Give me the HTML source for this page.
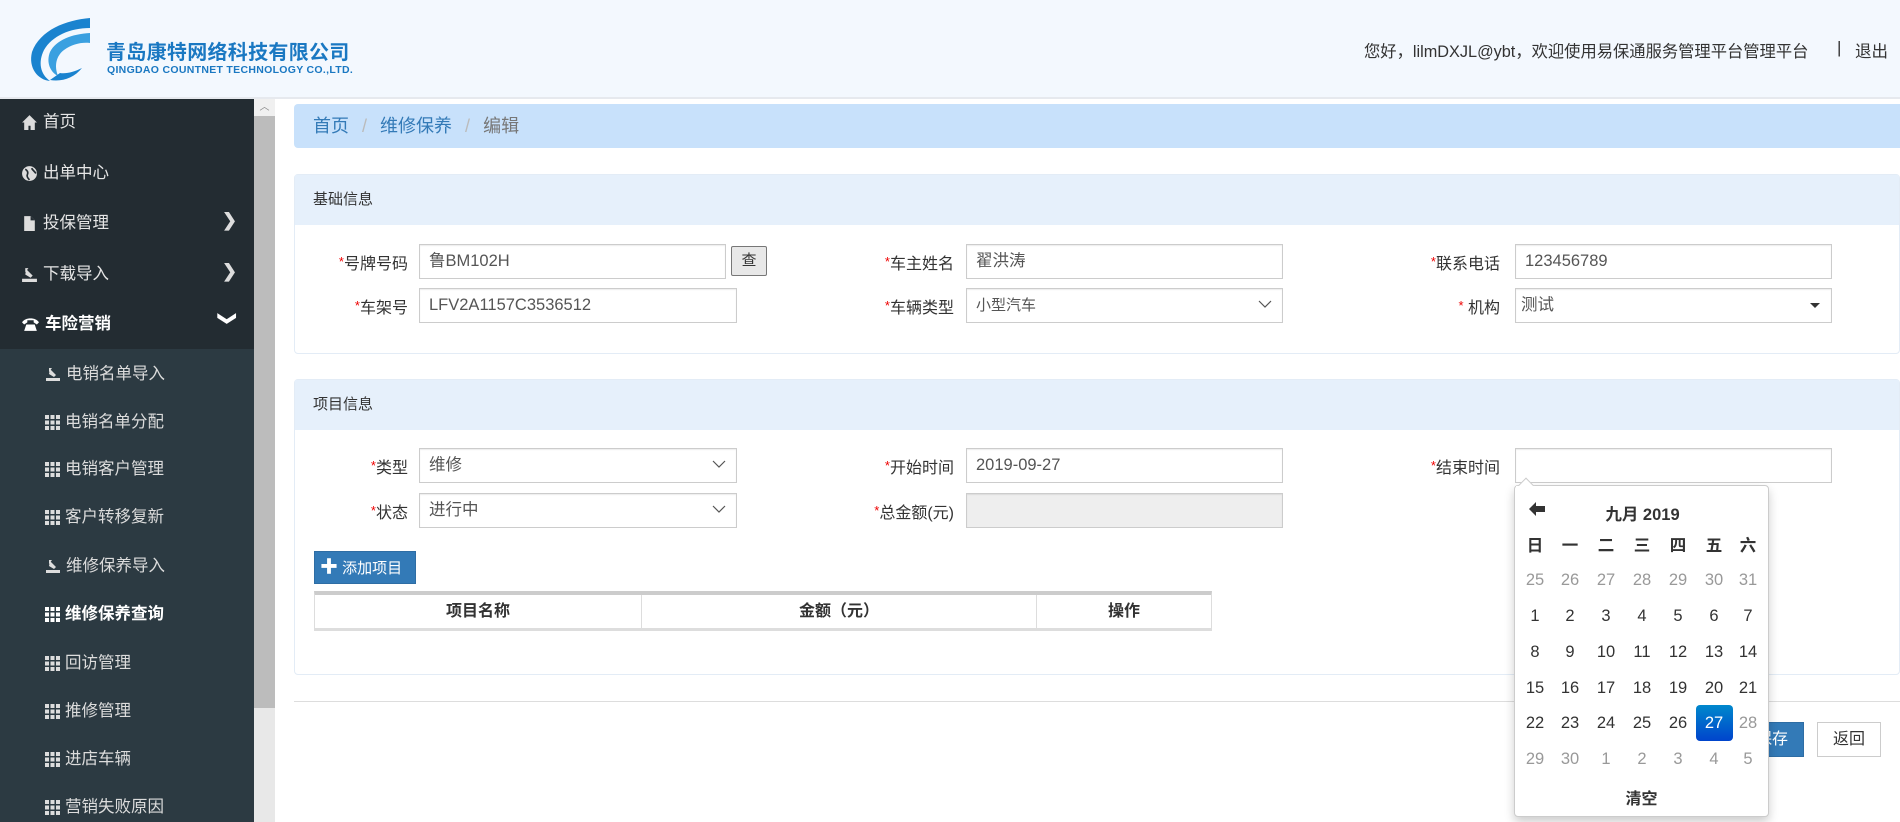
<!DOCTYPE html>
<html><head><meta charset="utf-8">
<style>
*{margin:0;padding:0;box-sizing:border-box}
body{width:1900px;height:822px;overflow:hidden;background:#fff;font-family:"Liberation Sans","Noto Sans CJK SC",sans-serif;font-size:16px;color:#333;position:relative}
.a{position:absolute}
.hdr{left:0;top:0;width:1900px;height:99px;background:#f3f8fe;border-bottom:2px solid #e6e9ee}
.side{left:0;top:99px;width:254px;height:723px;background:#232c32}
.sub{left:0;top:349px;width:254px;height:473px;background:#2c3a42}
.mi{position:absolute;left:21px;color:#e6e6e6;font-size:16.5px;line-height:20px;display:flex;align-items:center}
.mi svg{margin-right:5px}
.si{position:absolute;left:45px;color:#dcdcdc;font-size:16.5px;line-height:20px;display:flex;align-items:center}
.si svg{margin-right:5px}
.chev{position:absolute;left:222px;color:#ddd;font-size:18px;font-weight:bold}
.panel{left:294px;width:1606px;border:1px solid #e3ecf6;border-radius:4px;background:#fff}
.ph{height:50px;background:#e6f0fb;font-size:15px;color:#333;padding-left:18px;line-height:50px}
.lbl{position:absolute;font-size:16px;color:#333;text-align:right;line-height:20px}
.lbl b{color:#e00;font-weight:normal;font-size:13px;vertical-align:3px}
.inp{position:absolute;height:35px;border:1px solid #ccc;background:#fff;font-size:16.5px;color:#555;padding-left:9px;line-height:33px;box-shadow:inset 0 1px 1px rgba(0,0,0,.075)}
.dd{position:absolute;right:10px;top:8px}
.cal{left:1514px;top:485px;width:255px;height:332px;background:#fff;border:1px solid #ccc;border-radius:4px;box-shadow:0 5px 10px rgba(0,0,0,.2)}
.c{position:absolute;width:36px;text-align:center;font-size:16.5px;line-height:20px;color:#333}
.g{color:#999}
</style></head><body>
<div class="a hdr"></div>
<svg class="a" style="left:28px;top:16px" width="66" height="68" viewBox="0 0 66 68">
<path d="M62 2 C38 4 12 14 4 36 C0 52 10 64 22 65 C12 58 10 46 16 34 C24 20 42 12 62 12 Z" fill="#1a83cf"/>
<path d="M62 17 C44 18 28 24 22 36 C18 46 22 56 30 60 C26 50 28 40 36 34 C44 28 54 26 62 27 Z" fill="#3aa0e0"/>
<path d="M22 64 C34 66 46 62 54 52 C46 56 38 58 32 57 Z" fill="#1a83cf"/>
</svg>
<div class="a" style="left:106px;top:36px;font-size:20px;font-weight:bold;color:#1a78c2;letter-spacing:0.3px">青岛康特网络科技有限公司</div>
<div class="a" style="left:107px;top:64px;font-size:10.5px;font-weight:bold;color:#1a78c2;letter-spacing:0.3px">QINGDAO COUNTNET TECHNOLOGY CO.,LTD.</div>
<div class="a" style="left:1364px;top:38px;font-size:16.3px;color:#333">您好，lilmDXJL@ybt，欢迎使用易保通服务管理平台管理平台</div>
<div class="a" style="left:1837px;top:38px;font-size:17px;color:#333">|</div>
<div class="a" style="left:1855px;top:38px;font-size:16.5px;color:#333">退出</div>

<div class="a side"></div>
<div class="a sub"></div>
<div class="a" style="left:254px;top:99px;width:21px;height:723px;background:#e8e8e8"></div>
<div class="a" style="left:254px;top:99px;width:21px;height:17px;background:#f0f0f0;color:#888;font-size:10px;text-align:center;line-height:17px">︿</div>
<div class="a" style="left:254px;top:116px;width:21px;height:592px;background:#bcbcbc"></div>

<div class="mi" style="top:112px"><svg width="17" height="17" viewBox="0 0 16 16"><path d="M8 1 L1 8 H3 V15 H7 V11 H9 V15 H13 V8 H15 Z" fill="#ddd"/></svg>首页</div>
<div class="mi" style="top:163px"><svg width="17" height="17" viewBox="0 0 16 16"><circle cx="8" cy="8" r="7" fill="#ddd"/><path d="M4 4 C6 5 7 7 6 9 C5 11 7 13 8 14 M10 3 C11 5 13 6 14 8" stroke="#232c32" stroke-width="1.6" fill="none"/></svg>出单中心</div>
<div class="mi" style="top:213px"><svg width="17" height="17" viewBox="0 0 16 16"><path d="M3 1 H9 L13 5 V15 H3 Z" fill="#ddd"/><path d="M9 1 V5 H13" fill="#232c32"/></svg>投保管理</div>
<div class="chev" style="top:210px">❯</div>
<div class="mi" style="top:264px"><svg width="17" height="17" viewBox="0 0 16 16"><path d="M1 12 H15 V15 H1 Z M5 3 L11 9 L9 11 L4 8 Z M4 2 L7 2 L4 6 Z" fill="#ddd"/></svg>下载导入</div>
<div class="chev" style="top:261px">❯</div>
<div class="mi" style="top:314px;color:#fff;font-weight:bold"><svg width="19" height="17" viewBox="0 0 18 16"><path d="M1 6 C4 1 14 1 17 6 L15 8 L12 6 V4 H6 V6 L3 8 Z M3 14 L5 8 H13 L15 14 Z" fill="#fff"/></svg>车险营销</div>
<div class="chev" style="top:308px;transform:rotate(90deg);color:#fff;left:220px">❯</div>

<div class="si" style="top:364px"><svg width="16" height="16" viewBox="0 0 16 16"><path d="M1 12 H15 V15 H1 Z M5 3 L11 9 L9 11 L4 8 Z M4 2 L7 2 L4 6 Z" fill="#ddd"/></svg>电销名单导入</div>
<div class="si" style="top:412px"><svg width="15" height="15" viewBox="0 0 15 15"><g fill="#ddd"><rect x="0" y="0" width="4" height="4"/><rect x="5.5" y="0" width="4" height="4"/><rect x="11" y="0" width="4" height="4"/><rect x="0" y="5.5" width="4" height="4"/><rect x="5.5" y="5.5" width="4" height="4"/><rect x="11" y="5.5" width="4" height="4"/><rect x="0" y="11" width="4" height="4"/><rect x="5.5" y="11" width="4" height="4"/><rect x="11" y="11" width="4" height="4"/></g></svg>电销名单分配</div>
<div class="si" style="top:459px"><svg width="15" height="15" viewBox="0 0 15 15"><g fill="#ddd"><rect x="0" y="0" width="4" height="4"/><rect x="5.5" y="0" width="4" height="4"/><rect x="11" y="0" width="4" height="4"/><rect x="0" y="5.5" width="4" height="4"/><rect x="5.5" y="5.5" width="4" height="4"/><rect x="11" y="5.5" width="4" height="4"/><rect x="0" y="11" width="4" height="4"/><rect x="5.5" y="11" width="4" height="4"/><rect x="11" y="11" width="4" height="4"/></g></svg>电销客户管理</div>
<div class="si" style="top:507px"><svg width="15" height="15" viewBox="0 0 15 15"><g fill="#ddd"><rect x="0" y="0" width="4" height="4"/><rect x="5.5" y="0" width="4" height="4"/><rect x="11" y="0" width="4" height="4"/><rect x="0" y="5.5" width="4" height="4"/><rect x="5.5" y="5.5" width="4" height="4"/><rect x="11" y="5.5" width="4" height="4"/><rect x="0" y="11" width="4" height="4"/><rect x="5.5" y="11" width="4" height="4"/><rect x="11" y="11" width="4" height="4"/></g></svg>客户转移复新</div>
<div class="si" style="top:556px"><svg width="16" height="16" viewBox="0 0 16 16"><path d="M1 12 H15 V15 H1 Z M5 3 L11 9 L9 11 L4 8 Z M4 2 L7 2 L4 6 Z" fill="#ddd"/></svg>维修保养导入</div>
<div class="si" style="top:604px;color:#fff;font-weight:bold"><svg width="15" height="15" viewBox="0 0 15 15"><g fill="#fff"><rect x="0" y="0" width="4" height="4"/><rect x="5.5" y="0" width="4" height="4"/><rect x="11" y="0" width="4" height="4"/><rect x="0" y="5.5" width="4" height="4"/><rect x="5.5" y="5.5" width="4" height="4"/><rect x="11" y="5.5" width="4" height="4"/><rect x="0" y="11" width="4" height="4"/><rect x="5.5" y="11" width="4" height="4"/><rect x="11" y="11" width="4" height="4"/></g></svg>维修保养查询</div>
<div class="si" style="top:653px"><svg width="15" height="15" viewBox="0 0 15 15"><g fill="#ddd"><rect x="0" y="0" width="4" height="4"/><rect x="5.5" y="0" width="4" height="4"/><rect x="11" y="0" width="4" height="4"/><rect x="0" y="5.5" width="4" height="4"/><rect x="5.5" y="5.5" width="4" height="4"/><rect x="11" y="5.5" width="4" height="4"/><rect x="0" y="11" width="4" height="4"/><rect x="5.5" y="11" width="4" height="4"/><rect x="11" y="11" width="4" height="4"/></g></svg>回访管理</div>
<div class="si" style="top:701px"><svg width="15" height="15" viewBox="0 0 15 15"><g fill="#ddd"><rect x="0" y="0" width="4" height="4"/><rect x="5.5" y="0" width="4" height="4"/><rect x="11" y="0" width="4" height="4"/><rect x="0" y="5.5" width="4" height="4"/><rect x="5.5" y="5.5" width="4" height="4"/><rect x="11" y="5.5" width="4" height="4"/><rect x="0" y="11" width="4" height="4"/><rect x="5.5" y="11" width="4" height="4"/><rect x="11" y="11" width="4" height="4"/></g></svg>推修管理</div>
<div class="si" style="top:749px"><svg width="15" height="15" viewBox="0 0 15 15"><g fill="#ddd"><rect x="0" y="0" width="4" height="4"/><rect x="5.5" y="0" width="4" height="4"/><rect x="11" y="0" width="4" height="4"/><rect x="0" y="5.5" width="4" height="4"/><rect x="5.5" y="5.5" width="4" height="4"/><rect x="11" y="5.5" width="4" height="4"/><rect x="0" y="11" width="4" height="4"/><rect x="5.5" y="11" width="4" height="4"/><rect x="11" y="11" width="4" height="4"/></g></svg>进店车辆</div>
<div class="si" style="top:797px"><svg width="15" height="15" viewBox="0 0 15 15"><g fill="#ddd"><rect x="0" y="0" width="4" height="4"/><rect x="5.5" y="0" width="4" height="4"/><rect x="11" y="0" width="4" height="4"/><rect x="0" y="5.5" width="4" height="4"/><rect x="5.5" y="5.5" width="4" height="4"/><rect x="11" y="5.5" width="4" height="4"/><rect x="0" y="11" width="4" height="4"/><rect x="5.5" y="11" width="4" height="4"/><rect x="11" y="11" width="4" height="4"/></g></svg>营销失败原因</div>

<div class="a" style="left:294px;top:104px;width:1606px;height:44px;background:#c8e1fb;border-radius:4px 0 0 4px;font-size:18px;line-height:44px;padding-left:19px;color:#337ab7">首页 <span style="color:#bbb;margin:0 8px">/</span> 维修保养 <span style="color:#bbb;margin:0 8px">/</span> <span style="color:#777">编辑</span></div>

<div class="a panel" style="top:174px;height:180px"><div class="ph">基础信息</div></div>
<div class="lbl" style="left:300px;width:108px;top:252px"><b>*</b>号牌号码</div>
<div class="inp" style="left:419px;top:244px;width:307px">鲁BM102H</div>
<div class="a" style="left:731px;top:246px;width:36px;height:30px;border:1px solid #777;background:#e8e8e8;font-size:15px;text-align:center;line-height:28px;border-radius:2px">查</div>
<div class="lbl" style="left:300px;width:108px;top:296px"><b>*</b>车架号</div>
<div class="inp" style="left:419px;top:288px;width:318px">LFV2A1157C3536512</div>
<div class="lbl" style="left:800px;width:154px;top:252px"><b>*</b>车主姓名</div>
<div class="inp" style="left:966px;top:244px;width:317px">翟洪涛</div>
<div class="lbl" style="left:800px;width:154px;top:296px"><b>*</b>车辆类型</div>
<div class="inp" style="left:966px;top:288px;width:317px;font-size:15px">小型汽车<svg class="dd" width="14" height="14" viewBox="0 0 14 14"><path d="M1 4 L7 10 L13 4" stroke="#555" fill="none" stroke-width="1.2"/></svg></div>
<div class="lbl" style="left:1350px;width:150px;top:252px"><b>*</b>联系电话</div>
<div class="inp" style="left:1515px;top:244px;width:317px">123456789</div>
<div class="lbl" style="left:1350px;width:150px;top:296px"><b>*</b> 机构</div>
<div class="inp" style="left:1515px;top:288px;width:317px;padding-left:5px">测试<svg class="dd" width="12" height="14" viewBox="0 0 12 14" style="top:10px"><path d="M1 4 H11 L6 9 Z" fill="#333"/></svg></div>

<div class="a panel" style="top:379px;height:296px"><div class="ph">项目信息</div></div>
<div class="lbl" style="left:300px;width:108px;top:456px"><b>*</b>类型</div>
<div class="inp" style="left:419px;top:448px;width:318px">维修<svg class="dd" width="14" height="14" viewBox="0 0 14 14"><path d="M1 4 L7 10 L13 4" stroke="#555" fill="none" stroke-width="1.2"/></svg></div>
<div class="lbl" style="left:300px;width:108px;top:501px"><b>*</b>状态</div>
<div class="inp" style="left:419px;top:493px;width:318px">进行中<svg class="dd" width="14" height="14" viewBox="0 0 14 14"><path d="M1 4 L7 10 L13 4" stroke="#555" fill="none" stroke-width="1.2"/></svg></div>
<div class="lbl" style="left:800px;width:154px;top:456px"><b>*</b>开始时间</div>
<div class="inp" style="left:966px;top:448px;width:317px">2019-09-27</div>
<div class="lbl" style="left:800px;width:154px;top:501px"><b>*</b>总金额(元)</div>
<div class="inp" style="left:966px;top:493px;width:317px;background:#eee"></div>
<div class="lbl" style="left:1350px;width:150px;top:456px"><b>*</b>结束时间</div>
<div class="inp" style="left:1515px;top:448px;width:317px"></div>

<div class="a" style="left:314px;top:551px;width:102px;height:33px;background:#337ab7;border:1px solid #2e6da4;color:#fff;font-size:15px;line-height:31px;padding-left:5px"><b style="font-size:18px">✚</b> 添加项目</div>
<div class="a" style="left:314px;top:591px;width:898px;height:40px;border:1px solid #ddd;border-top:4px solid #ccc;border-bottom:3px solid #ddd;font-weight:bold;font-size:16px">
<div class="a" style="left:0;width:327px;top:0;height:33px;text-align:center;line-height:33px;border-right:1px solid #ddd">项目名称</div>
<div class="a" style="left:327px;width:395px;top:0;height:33px;text-align:center;line-height:33px;border-right:1px solid #ddd">金额（元）</div>
<div class="a" style="left:722px;width:174px;top:0;height:33px;text-align:center;line-height:33px">操作</div>
</div>

<div class="a" style="left:294px;top:701px;width:1606px;height:1px;background:#ddd"></div>
<div class="a" style="left:1740px;top:722px;width:64px;height:35px;background:#337ab7;border:1px solid #2e6da4;color:#fff;line-height:33px;text-align:center">保存</div>
<div class="a" style="left:1817px;top:722px;width:64px;height:35px;background:#fff;border:1px solid #ccc;line-height:33px;text-align:center">返回</div>

<div class="a cal">
<svg class="a" style="left:13px;top:15px" width="18" height="16" viewBox="0 0 18 16"><path d="M1 8 L8 1 V5 H17 V11 H8 V15 Z" fill="#333"/></svg>
<div class="a" style="left:0;width:255px;top:15px;text-align:center;font-weight:bold;font-size:16.5px">九月 2019</div>
</div>
<div class="a" style="left:1520px;top:480px;width:12px;height:12px;background:#fff;border-left:1px solid #ccc;border-top:1px solid #ccc;transform:rotate(45deg)"></div>
<div class="a" style="left:1516px;top:486px;width:20px;height:8px;background:#fff"></div>
<div class="a" style="left:1514px;top:485px;width:255px;height:332px">
<div class="c" style="left:3px;top:51px;font-weight:bold">日</div><div class="c" style="left:38px;top:51px;font-weight:bold">一</div><div class="c" style="left:74px;top:51px;font-weight:bold">二</div><div class="c" style="left:110px;top:51px;font-weight:bold">三</div><div class="c" style="left:146px;top:51px;font-weight:bold">四</div><div class="c" style="left:182px;top:51px;font-weight:bold">五</div><div class="c" style="left:216px;top:51px;font-weight:bold">六</div>
<div class="c g" style="left:3px;top:85px">25</div><div class="c g" style="left:38px;top:85px">26</div><div class="c g" style="left:74px;top:85px">27</div><div class="c g" style="left:110px;top:85px">28</div><div class="c g" style="left:146px;top:85px">29</div><div class="c g" style="left:182px;top:85px">30</div><div class="c g" style="left:216px;top:85px">31</div>
<div class="c" style="left:3px;top:121px">1</div><div class="c" style="left:38px;top:121px">2</div><div class="c" style="left:74px;top:121px">3</div><div class="c" style="left:110px;top:121px">4</div><div class="c" style="left:146px;top:121px">5</div><div class="c" style="left:182px;top:121px">6</div><div class="c" style="left:216px;top:121px">7</div>
<div class="c" style="left:3px;top:157px">8</div><div class="c" style="left:38px;top:157px">9</div><div class="c" style="left:74px;top:157px">10</div><div class="c" style="left:110px;top:157px">11</div><div class="c" style="left:146px;top:157px">12</div><div class="c" style="left:182px;top:157px">13</div><div class="c" style="left:216px;top:157px">14</div>
<div class="c" style="left:3px;top:193px">15</div><div class="c" style="left:38px;top:193px">16</div><div class="c" style="left:74px;top:193px">17</div><div class="c" style="left:110px;top:193px">18</div><div class="c" style="left:146px;top:193px">19</div><div class="c" style="left:182px;top:193px">20</div><div class="c" style="left:216px;top:193px">21</div>
<div class="c" style="left:3px;top:228px">22</div><div class="c" style="left:38px;top:228px">23</div><div class="c" style="left:74px;top:228px">24</div><div class="c" style="left:110px;top:228px">25</div><div class="c" style="left:146px;top:228px">26</div>
<div class="a" style="left:182px;top:220px;width:37px;height:36px;border-radius:4px;background:linear-gradient(#0088cc,#0044cc)"></div>
<div class="c" style="left:182px;top:228px;color:#fff">27</div><div class="c g" style="left:216px;top:228px">28</div>
<div class="c g" style="left:3px;top:264px">29</div><div class="c g" style="left:38px;top:264px">30</div><div class="c g" style="left:74px;top:264px">1</div><div class="c g" style="left:110px;top:264px">2</div><div class="c g" style="left:146px;top:264px">3</div><div class="c g" style="left:182px;top:264px">4</div><div class="c g" style="left:216px;top:264px">5</div>
<div class="a" style="left:0;width:255px;top:300px;text-align:center;font-weight:bold">清空</div>
</div>
</body></html>
